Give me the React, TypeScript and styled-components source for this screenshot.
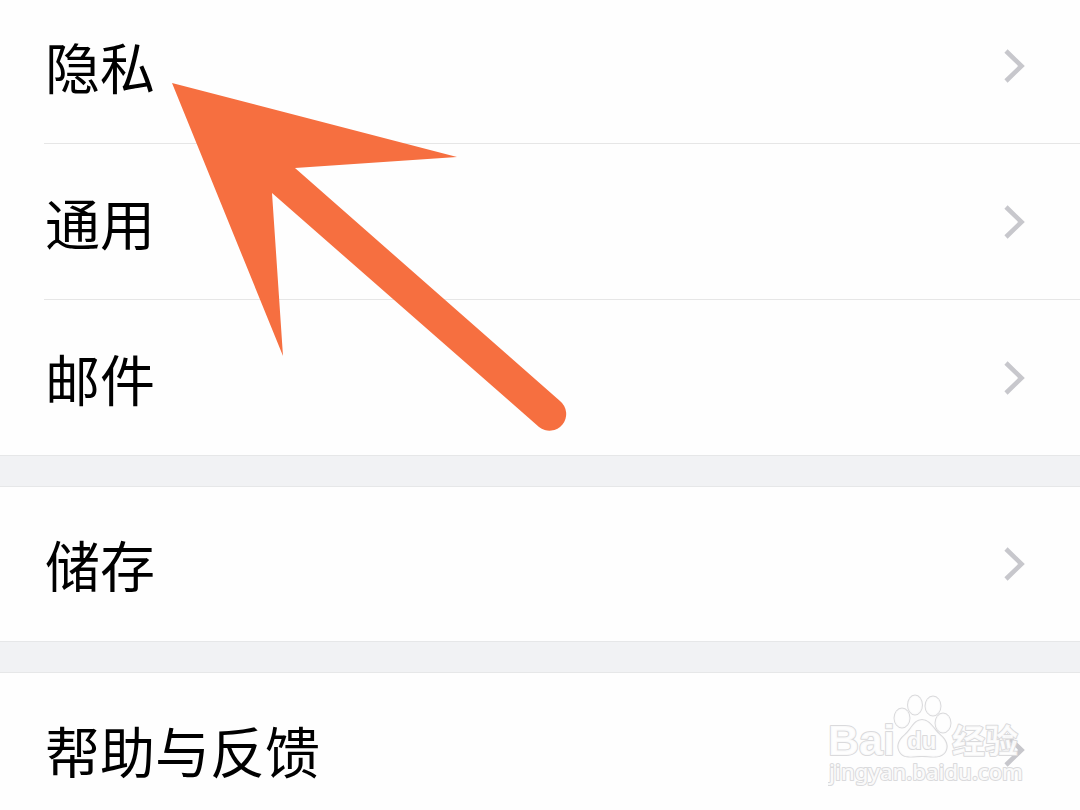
import React from "react";
import styled, { createGlobalStyle } from "styled-components";

const GlobalStyle = createGlobalStyle`
  *, *::before, *::after { box-sizing: border-box; }
  html, body { margin: 0; background: #fefefe; }
  body { font-family: "Noto Sans CJK SC", sans-serif; color: #000; }
`;

const Screen = styled.main`
  position: relative;
  height: 100vh;
  overflow: hidden;
`;

/* The list is scrolled slightly past the top edge of the screen. */
const Settings = styled.nav`
  display: flex;
  flex-direction: column;
  gap: 30px;
  margin-top: -13px;
  background: #f1f2f4;
`;

const Group = styled.ul`
  list-style: none;
  margin: 0;
  padding: 0;
  background: #fefefe;
  border-top: 1px solid #e6e7e8;
  border-bottom: 1px solid #e6e7e8;
`;

const Item = styled.li`
  & + & > a::before {
    content: "";
    position: absolute;
    top: -1px;
    left: 44px;
    right: 0;
    height: 1px;
    background: #e6e6e6;
  }
  & + & {
    margin-top: 1px;
  }
`;

const RowLink = styled.a<{ $tall?: boolean }>`
  position: relative;
  display: flex;
  align-items: center;
  justify-content: space-between;
  height: ${(p) => (p.$tall ? 155 : 154)}px;
  padding: 0 54px 0 45px;
  color: inherit;
  text-decoration: none;
`;

const Label = styled.span`
  font-size: 55px;
  line-height: 80px;
  padding-bottom: 2px;
`;

const Chevron = () => (
  <svg width="24" height="36" viewBox="0 0 24 36" fill="none" aria-hidden="true">
    <path d="M4 3 L19.5 18 L4 33" stroke="#c7c7cc" strokeWidth="4.6" />
  </svg>
);

const Pointer = styled.svg`
  position: absolute;
  top: 83px;
  left: 172px;
  pointer-events: none;
`;

const Watermark = styled.svg`
  position: absolute;
  right: 52px;
  bottom: 16px;
  pointer-events: none;
  paint-order: stroke;

  text,
  path,
  ellipse {
    fill: #fefefe;
    fill-opacity: 0.9;
    stroke: #dadadc;
    stroke-width: 2px;
    stroke-linejoin: round;
  }
`;

const groups = [["隐私", "通用", "邮件"], ["储存"], ["帮助与反馈"]];

export default function App() {
  return (
    <>
      <GlobalStyle />
      <Screen>
        <Settings aria-label="设置">
          {groups.map((items) => (
            <Group key={items[0]}>
              {items.map((name) => (
                <Item key={name}>
                  <RowLink href="#" $tall={items.length > 1}>
                    <Label>{name}</Label>
                    <Chevron />
                  </RowLink>
                </Item>
              ))}
            </Group>
          ))}
        </Settings>

        <Pointer width="396" height="350" viewBox="0 0 396 350" aria-hidden="true">
          <path
            fill="#f66f40"
            d="M0 0 L285 74 L123 85 L388 318 A16.5 16.5 0 0 1 367 344 L100 110 L111 273 Z"
          />
        </Pointer>

        <Watermark width="200" height="100" viewBox="0 0 200 100">
          <text x="0" y="61" fontFamily="Liberation Sans, sans-serif" fontWeight="700" fontSize="43">
            Bai
          </text>
          <ellipse cx="74" cy="24" rx="7.5" ry="9.5" />
          <ellipse cx="87" cy="11" rx="7" ry="9.5" />
          <ellipse cx="105" cy="12" rx="7.5" ry="9.5" />
          <ellipse cx="115" cy="29" rx="7.5" ry="9.5" />
          <path d="M94 26 C86 26 84 35 77 41 C70 47 69 53 72 58 C76 65 86 62 94 62 C102 62 112 65 117 58 C120 53 119 47 112 41 C105 35 102 26 94 26 Z" />
          <text x="79" y="55" fontFamily="Liberation Sans, sans-serif" fontWeight="700" fontSize="24">
            du
          </text>
          <text x="124" y="59" fontFamily="Noto Sans CJK SC, sans-serif" fontWeight="700" fontSize="33">
            经验
          </text>
          <text x="1" y="86" fontFamily="Noto Sans, sans-serif" fontWeight="500" fontSize="22">
            jingyan.baidu.com
          </text>
        </Watermark>
      </Screen>
    </>
  );
}
